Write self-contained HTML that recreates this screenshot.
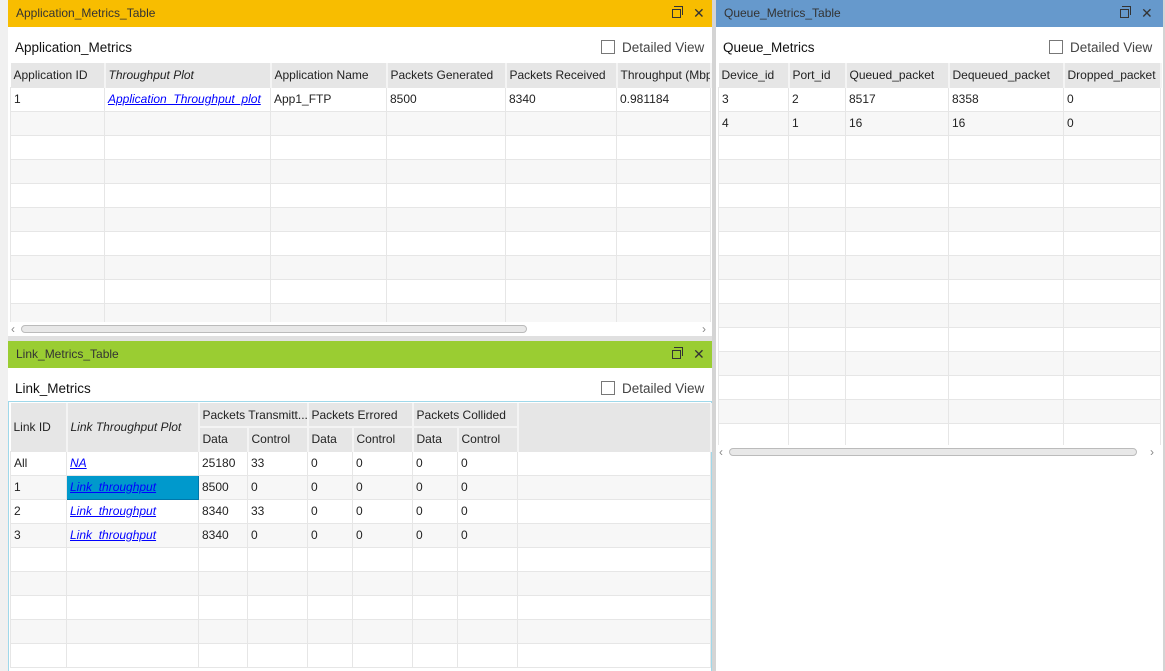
<!DOCTYPE html>
<html><head><meta charset="utf-8"><style>
*{margin:0;padding:0;box-sizing:border-box}
body{width:1165px;height:671px;overflow:hidden;background:#fff;font-family:"Liberation Sans",sans-serif;font-size:12px;color:#222;position:relative}
.abs{position:absolute}
.hdr{position:absolute;height:27px;font-size:12px;color:#333;padding:6px 0 0 8px}
.hdr .ic{position:absolute;top:5px;font-size:14px}
.hdr .rs{position:absolute;top:9px;width:9px;height:9px;border:1px solid #333}
.hdr .rs:before{content:"";position:absolute;left:1px;top:-4px;width:8px;height:8px;border-top:1px solid #333;border-right:1px solid #333}
.ttl{position:absolute;font-size:13.5px;color:#111}
.dv{position:absolute;font-size:13.5px;color:#444}
.dv i{display:inline-block;width:14px;height:14px;border:1px solid #777;vertical-align:-2px;margin-right:7px;background:#fff}
table{border-collapse:collapse;table-layout:fixed;position:absolute}
td,th{height:24px;border:1px solid #e6e6e6;padding:0 3px;text-align:left;font-weight:normal;white-space:nowrap;overflow:hidden;font-size:12px}
th{background:#e6e6e6;border-color:#f4f4f4;border-width:0 2px 0 0}
.s1 tr:nth-child(odd) td{background:#f7f7f7}
.s2 tr:nth-child(even) td{background:#f7f7f7}
a{color:#00f;font-style:italic;text-decoration:underline}
.it{font-style:italic}
.sb{position:absolute;height:14px;background:#fff}
.sb .th{position:absolute;top:3px;height:8px;border:1px solid #bbb;background:#e8e8e8;border-radius:4px}
</style></head><body>
<div class="abs" style="left:0;top:0;width:8px;height:671px;background:#f0f0f0"></div>
<div class="abs" style="left:712px;top:0;width:4px;height:671px;background:#d4d4d4"></div>
<div class="abs" style="left:1163px;top:0;width:2px;height:671px;background:#d4d4d4"></div>

<div class="hdr" style="left:8px;top:0;width:704px;background:#f8bd00">Application_Metrics_Table<span class="rs" style="left:664px"></span><span class="ic" style="left:685px">&#x2715;</span></div>
<div class="ttl" style="left:15px;top:40px">Application_Metrics</div>
<div class="dv" style="left:601px;top:40px"><i></i>Detailed View</div>
<table class="s1" style="left:10px;top:63px;width:700px">
<colgroup><col style="width:94px"><col style="width:166px"><col style="width:116px"><col style="width:119px"><col style="width:111px"><col style="width:94px"></colgroup>
<tr><th style="height:23px">Application ID</th><th class="it">Throughput Plot</th><th>Application Name</th><th>Packets Generated</th><th>Packets Received</th><th>Throughput (Mbps)</th></tr>
<tr><td>1</td><td><a>Application_Throughput_plot</a></td><td>App1_FTP</td><td>8500</td><td>8340</td><td>0.981184</td></tr>
<tr><td></td><td></td><td></td><td></td><td></td><td></td></tr>
<tr><td></td><td></td><td></td><td></td><td></td><td></td></tr>
<tr><td></td><td></td><td></td><td></td><td></td><td></td></tr>
<tr><td></td><td></td><td></td><td></td><td></td><td></td></tr>
<tr><td></td><td></td><td></td><td></td><td></td><td></td></tr>
<tr><td></td><td></td><td></td><td></td><td></td><td></td></tr>
<tr><td></td><td></td><td></td><td></td><td></td><td></td></tr>
<tr><td></td><td></td><td></td><td></td><td></td><td></td></tr>
<tr><td style="height:12px"></td><td></td><td></td><td></td><td></td><td></td></tr>
</table>
<div class="sb" style="left:8px;top:322px;width:704px"><span class="abs" style="left:3px;top:0;color:#888">&#8249;</span><div class="th" style="left:13px;width:506px"></div><span class="abs" style="left:694px;top:0;color:#888">&#8250;</span></div>
<div class="abs" style="left:8px;top:336px;width:704px;height:5px;background:#e0e0e0"></div>

<div class="hdr" style="left:8px;top:341px;width:704px;background:#9acd32">Link_Metrics_Table<span class="rs" style="left:664px"></span><span class="ic" style="left:685px">&#x2715;</span></div>
<div class="ttl" style="left:15px;top:381px">Link_Metrics</div>
<div class="dv" style="left:601px;top:381px"><i></i>Detailed View</div>
<div class="abs" style="left:8px;top:401px;width:704px;height:270px;border:1px solid #9fd8ea;border-bottom:0"></div>
<table class="s2" style="left:10px;top:403px;width:700px">
<colgroup><col style="width:56px"><col style="width:132px"><col style="width:49px"><col style="width:60px"><col style="width:45px"><col style="width:60px"><col style="width:45px"><col style="width:60px"><col style="width:193px"></colgroup>
<tr><th rowspan="2" style="border-bottom:0">Link ID</th><th rowspan="2" class="it">Link Throughput Plot</th><th colspan="2" style="border-bottom:2px solid #f4f4f4">Packets Transmitt...</th><th colspan="2" style="border-bottom:2px solid #f4f4f4">Packets Errored</th><th colspan="2" style="border-bottom:2px solid #f4f4f4">Packets Collided</th><th rowspan="2"></th></tr>
<tr><th>Data</th><th>Control</th><th>Data</th><th>Control</th><th>Data</th><th>Control</th></tr>
<tr><td>All</td><td><a>NA</a></td><td>25180</td><td>33</td><td>0</td><td>0</td><td>0</td><td>0</td><td></td></tr>
<tr><td>1</td><td style="background:#0099cc;border:1px solid #0077aa"><a>Link_throughput</a></td><td>8500</td><td>0</td><td>0</td><td>0</td><td>0</td><td>0</td><td></td></tr>
<tr><td>2</td><td><a>Link_throughput</a></td><td>8340</td><td>33</td><td>0</td><td>0</td><td>0</td><td>0</td><td></td></tr>
<tr><td>3</td><td><a>Link_throughput</a></td><td>8340</td><td>0</td><td>0</td><td>0</td><td>0</td><td>0</td><td></td></tr>
<tr><td></td><td></td><td></td><td></td><td></td><td></td><td></td><td></td><td></td></tr>
<tr><td></td><td></td><td></td><td></td><td></td><td></td><td></td><td></td><td></td></tr>
<tr><td></td><td></td><td></td><td></td><td></td><td></td><td></td><td></td><td></td></tr>
<tr><td></td><td></td><td></td><td></td><td></td><td></td><td></td><td></td><td></td></tr>
<tr><td></td><td></td><td></td><td></td><td></td><td></td><td></td><td></td><td></td></tr>
</table>

<div class="hdr" style="left:716px;top:0;width:447px;background:#6699cc">Queue_Metrics_Table<span class="rs" style="left:404px"></span><span class="ic" style="left:425px">&#x2715;</span></div>
<div class="ttl" style="left:723px;top:40px">Queue_Metrics</div>
<div class="dv" style="left:1049px;top:40px"><i></i>Detailed View</div>
<table class="s1" style="left:718px;top:63px;width:442px">
<colgroup><col style="width:70px"><col style="width:57px"><col style="width:103px"><col style="width:115px"><col style="width:97px"></colgroup>
<tr><th style="height:23px">Device_id</th><th>Port_id</th><th>Queued_packet</th><th>Dequeued_packet</th><th>Dropped_packet</th></tr>
<tr><td>3</td><td>2</td><td>8517</td><td>8358</td><td>0</td></tr>
<tr><td>4</td><td>1</td><td>16</td><td>16</td><td>0</td></tr>
<tr><td></td><td></td><td></td><td></td><td></td></tr>
<tr><td></td><td></td><td></td><td></td><td></td></tr>
<tr><td></td><td></td><td></td><td></td><td></td></tr>
<tr><td></td><td></td><td></td><td></td><td></td></tr>
<tr><td></td><td></td><td></td><td></td><td></td></tr>
<tr><td></td><td></td><td></td><td></td><td></td></tr>
<tr><td></td><td></td><td></td><td></td><td></td></tr>
<tr><td></td><td></td><td></td><td></td><td></td></tr>
<tr><td></td><td></td><td></td><td></td><td></td></tr>
<tr><td></td><td></td><td></td><td></td><td></td></tr>
<tr><td></td><td></td><td></td><td></td><td></td></tr>
<tr><td></td><td></td><td></td><td></td><td></td></tr>
<tr><td style="height:22px"></td><td></td><td></td><td></td><td></td></tr>
</table>
<div class="sb" style="left:716px;top:445px;width:447px"><span class="abs" style="left:3px;top:0;color:#888">&#8249;</span><div class="th" style="left:13px;width:408px"></div><span class="abs" style="left:434px;top:0;color:#888">&#8250;</span></div>
</body></html>
